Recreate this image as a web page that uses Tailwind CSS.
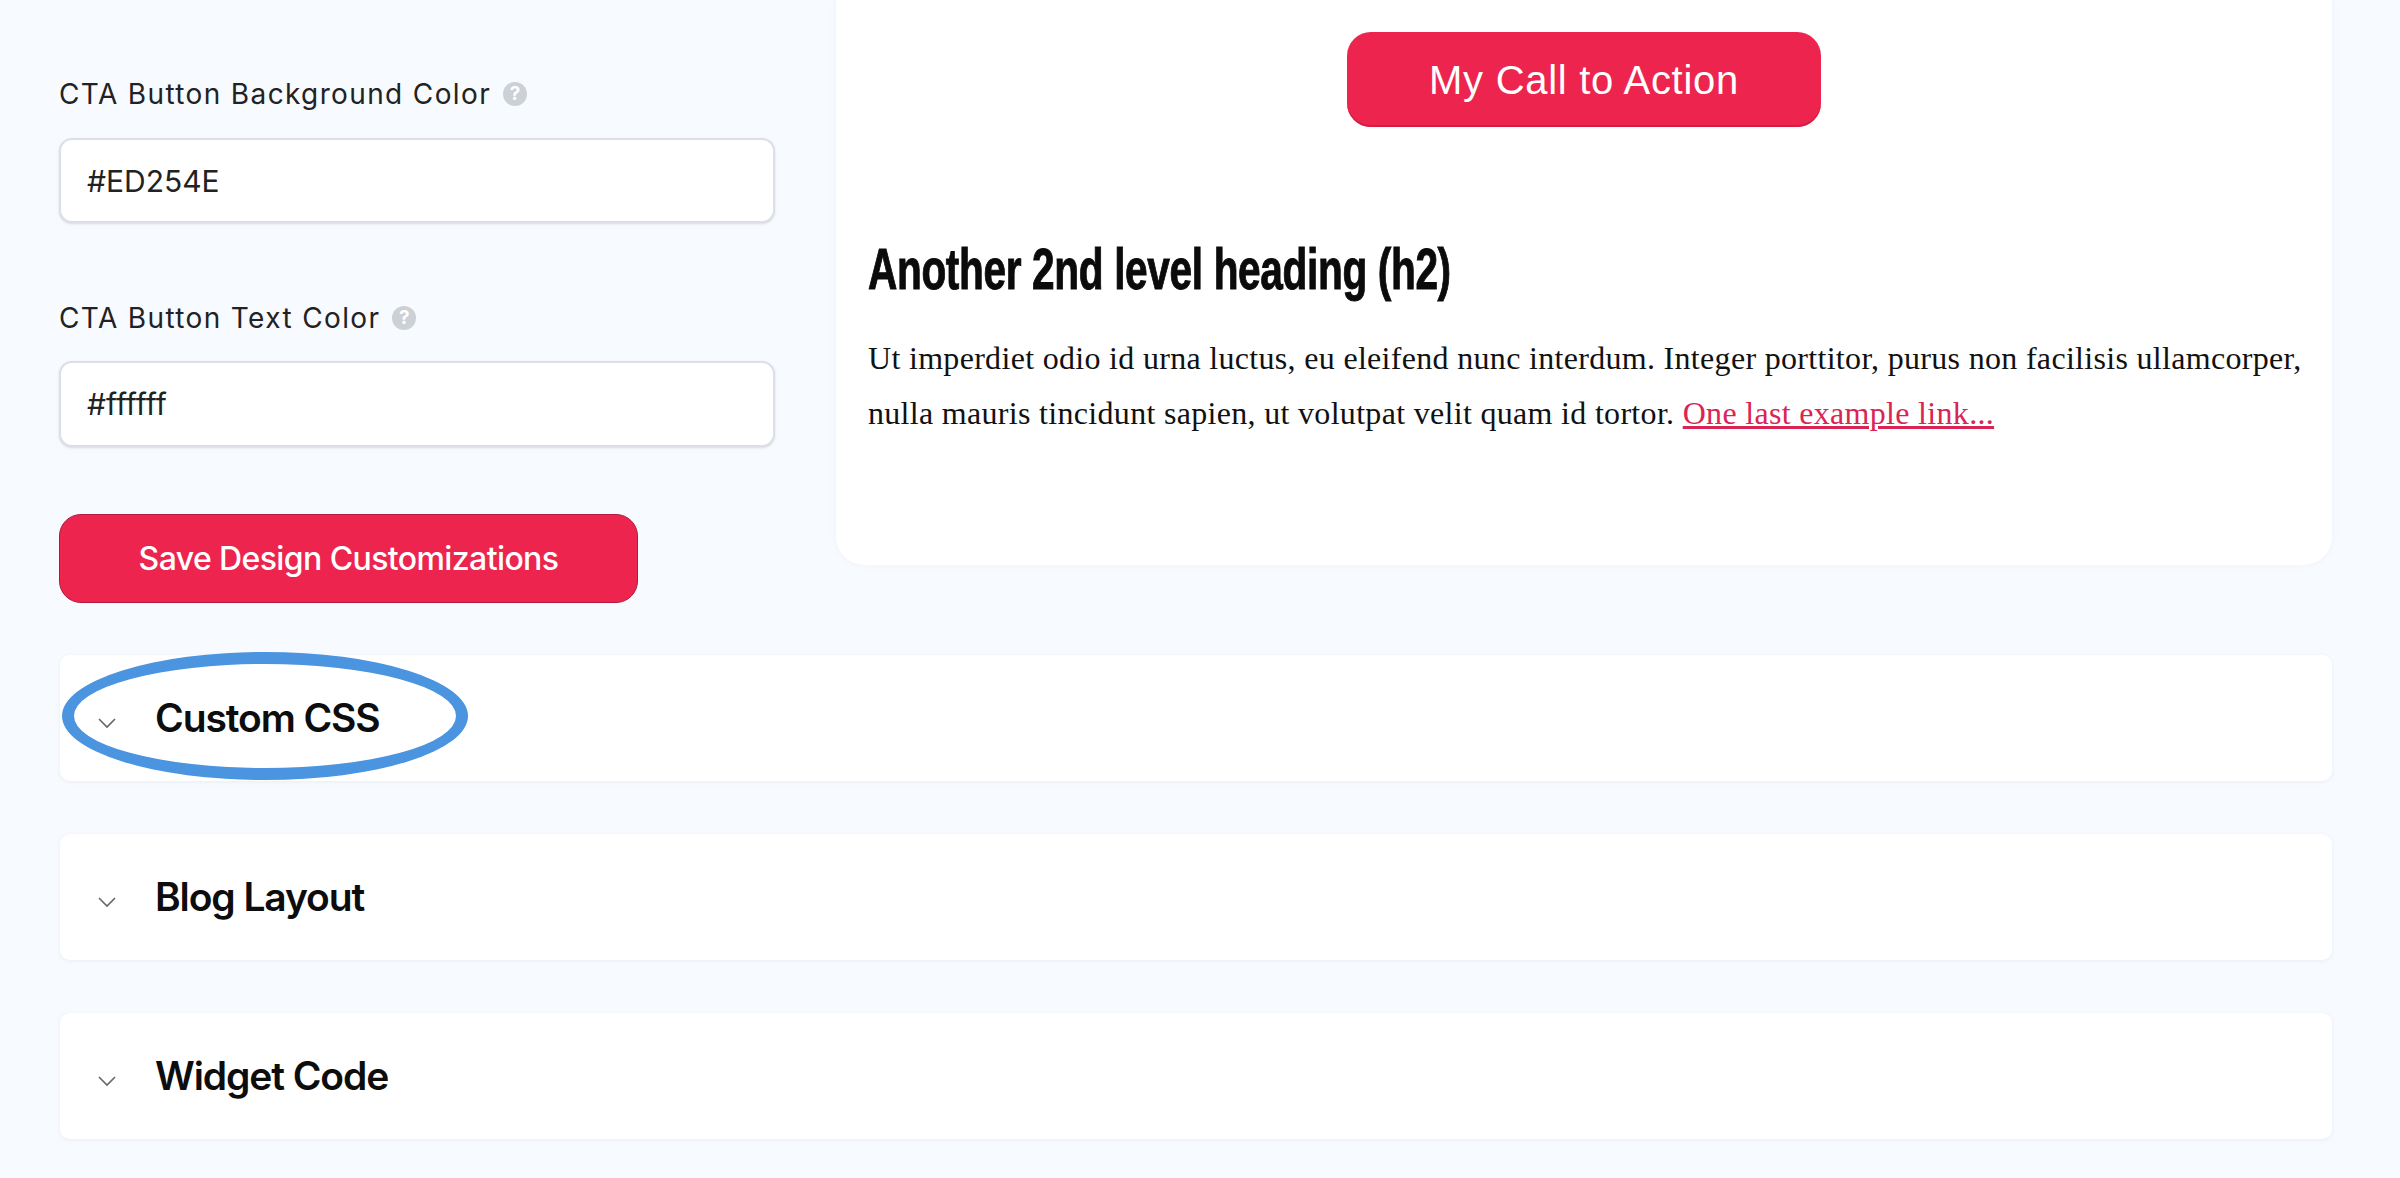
<!DOCTYPE html>
<html lang="en">
<head>
    <meta charset="UTF-8">
    <title>Design Customizations</title>
    <script src="https://cdn.jsdelivr.net/npm/@tailwindcss/browser@4"></script>
</head>
<body class="bg-[#f7fafe] font-['Inter',sans-serif] text-[#111] overflow-hidden">
    <div class="relative h-[1178px] pl-[59px] pr-[68px]">

        <!-- Top: form and preview -->
        <div class="flex items-start gap-[61px]">
            <div class="w-[716px] pt-[76px]">
                <label class="flex items-center gap-3 h-9 text-[28px] tracking-[1.37px] text-[#222]">
                    CTA Button Background Color
                    <span class="flex items-center justify-center w-6 h-6 rounded-full bg-[#ccd1d6] text-white text-[19px] font-bold tracking-normal">?</span>
                </label>
                <input type="text" value="#ED254E" class="block w-full h-[85px] mt-[26px] px-[26px] bg-white border-2 border-[#dcdfe8] rounded-[13px] shadow-sm text-[30px] text-[#222]">

                <label class="flex items-center gap-3 h-9 mt-[77px] text-[28px] tracking-[1.37px] text-[#222]">
                    CTA Button Text Color
                    <span class="flex items-center justify-center w-6 h-6 rounded-full bg-[#ccd1d6] text-white text-[19px] font-bold tracking-normal">?</span>
                </label>
                <input type="text" value="#ffffff" class="block w-full h-[86px] mt-[25px] px-[26px] bg-white border-2 border-[#dcdfe8] rounded-[13px] shadow-sm text-[30px] text-[#222]">

                <button class="block w-[579px] h-[89px] mt-[67px] bg-[#ed254e] border border-[#b3193c] rounded-[22px] text-white text-[32px] tracking-[-0.6px] font-medium">Save Design Customizations</button>
            </div>

            <div class="w-[1496px] h-[565px] bg-white rounded-b-[28px] pl-[32px] pr-[28px] shadow-[0_0_6px_rgba(180,190,210,0.12)]">
                <div class="flex justify-center pt-[32px] pr-[4px]">
                    <a class="flex items-center justify-center w-[474px] h-[95px] bg-[#ed254e] rounded-[24px] text-white text-[40px] tracking-[0.7px] font-['Liberation_Sans',sans-serif] shadow-[inset_0_-2px_0_#d41c44]">My Call to Action</a>
                </div>
                <h2 class="mt-[110px] origin-left scale-x-[.7] whitespace-nowrap text-[58px] leading-[64px] font-bold font-['Liberation_Sans',sans-serif] tracking-[-0.5px] text-[#0b0b0b] [-webkit-text-stroke:1px_#0b0b0b]">Another 2nd level heading (h2)</h2>
                <p class="mt-[30px] text-[32px] leading-[55px] tracking-[0.31px] text-[#111] font-['Liberation_Serif',serif]">Ut imperdiet odio id urna luctus, eu eleifend nunc interdum. Integer porttitor, purus non facilisis ullamcorper, nulla mauris tincidunt sapien, ut volutpat velit quam id tortor. <a class="text-[#d92553] underline">One last example link...</a></p>
            </div>
        </div>

        <!-- Accordion rows -->
        <div class="flex flex-col gap-[53px] mt-[52px] ml-[1px]">
            <div class="flex items-center h-[126px] pl-[38px] bg-white rounded-[10px] shadow-[0_1px_4px_rgba(180,190,210,0.18)]">
                <svg class="w-[18px] h-[11px] mt-[11px]" viewBox="0 0 18 11" fill="none" stroke="#666" stroke-width="1.6"><path d="M1 1l8 8 8-8"/></svg>
                <h3 class="ml-[39px] text-[39px] font-semibold tracking-[-1.1px] text-[#0d0d0d]">Custom CSS</h3>
            </div>
            <div class="flex items-center h-[126px] pl-[38px] bg-white rounded-[10px] shadow-[0_1px_4px_rgba(180,190,210,0.18)]">
                <svg class="w-[18px] h-[11px] mt-[11px]" viewBox="0 0 18 11" fill="none" stroke="#666" stroke-width="1.6"><path d="M1 1l8 8 8-8"/></svg>
                <h3 class="ml-[39px] text-[39px] font-semibold tracking-[-1.1px] text-[#0d0d0d]">Blog Layout</h3>
            </div>
            <div class="flex items-center h-[126px] pl-[38px] bg-white rounded-[10px] shadow-[0_1px_4px_rgba(180,190,210,0.18)]">
                <svg class="w-[18px] h-[11px] mt-[11px]" viewBox="0 0 18 11" fill="none" stroke="#666" stroke-width="1.6"><path d="M1 1l8 8 8-8"/></svg>
                <h3 class="ml-[39px] text-[39px] font-semibold tracking-[-1.1px] text-[#0d0d0d]">Widget Code</h3>
            </div>
        </div>

        <!-- Highlight ring over Custom CSS -->
        <div class="absolute left-[62px] top-[652px] w-[406px] h-[128px] rounded-[50%] border-[12px] border-[#4a94e0] shadow-[0_0_2px_rgba(255,255,255,0.9)]"></div>
    </div>
</body>
</html>
